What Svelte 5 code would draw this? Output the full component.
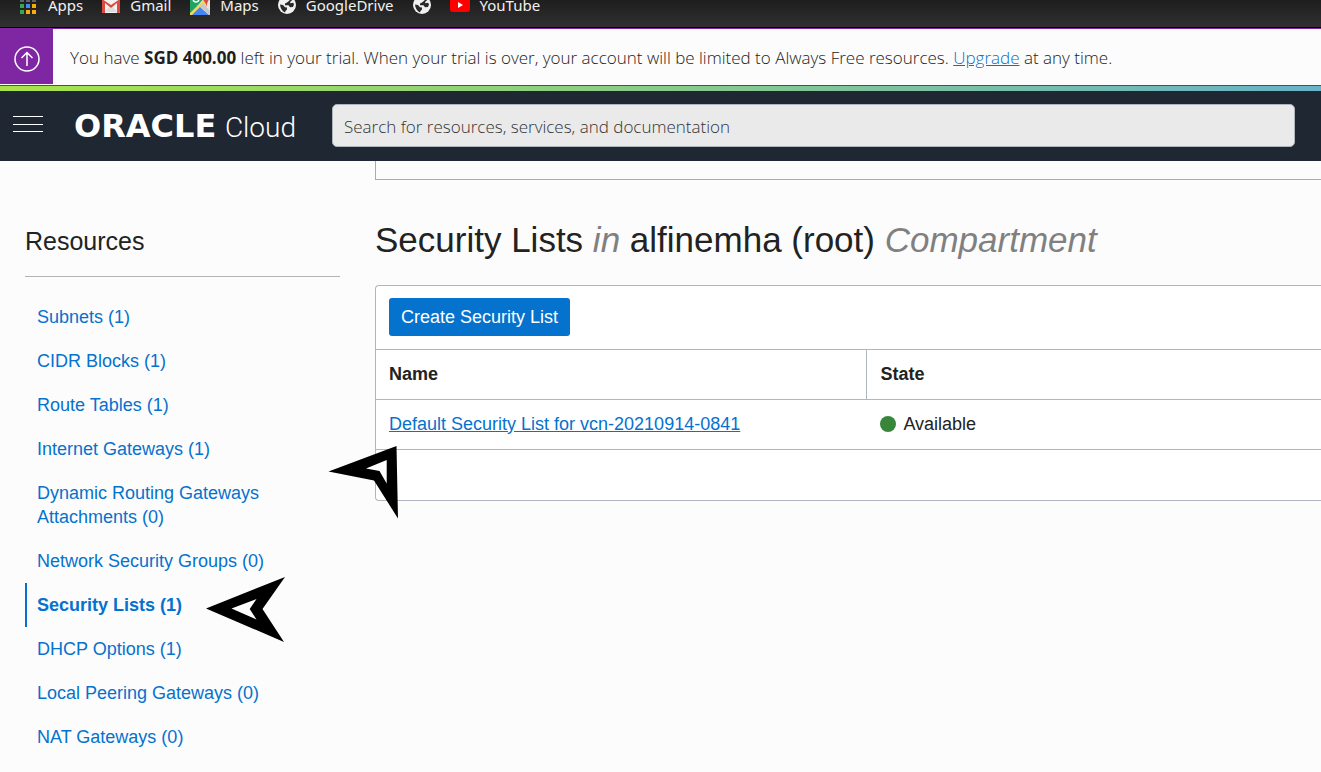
<script>
  const resources = [
    ['Subnets', 1],
    ['CIDR Blocks', 1],
    ['Route Tables', 1],
    ['Internet Gateways', 1],
    ['Dynamic Routing Gateways Attachments', 0],
    ['Network Security Groups', 0],
    ['Security Lists', 1],
    ['DHCP Options', 1],
    ['Local Peering Gateways', 0],
    ['NAT Gateways', 0]
  ];
  const active = 'Security Lists';
  const appColors = ['#5f6368', '#5f6368', '#5f6368', '#34a853', '#4285f4', '#f9ab00', '#34a853', '#fbab0c', '#fbab0c'];
</script>

{#snippet globe()}
  <svg width="18" height="18" viewBox="0 0 18 18" aria-hidden="true">
    <circle cx="9" cy="9" r="9" fill="#f1f1f1" />
    <path d="M2 8.5 5 9l2 2.2 2 .3v2L7.5 15 7 16.400Q2.500 14.500 2 8.500ZM7.500 2h4v2.500L9 6.500l-2 1v1.700h3.500l1.500 2 3-.2 1-2.500-.8-1.700-2.700.5L12 6l2-1.500-2.500-3Z" fill="#2a2a2a" />
  </svg>
{/snippet}

<nav class="bookmarks" aria-label="Bookmarks">
  <a href="#apps">
    <svg width="19" height="20" viewBox="0 0 19 20" aria-hidden="true">
      {#each appColors as color, i}
        <rect x={1 + (i % 3) * 6} y={3 + Math.floor(i / 3) * 6} width="4" height="4" fill={color} />
      {/each}
    </svg>
    Apps
  </a>
  <a href="#gmail">
    <svg width="18" height="20" viewBox="0 0 18 20" aria-hidden="true">
      <rect y="4" width="18" height="14" rx="1" fill="#f2f2f2" />
      <path d="M0 5v12q0 1 1 1h2V8l6 5 6-5v10h2q1 0 1-1V4L9 10 0 4Z" fill="#dd4b3e" />
      <path d="m3 17 4-5 2 1.500L11 12l4 5Z" fill="#ddd" />
    </svg>
    Gmail
  </a>
  <a href="#maps">
    <svg width="20" height="20" viewBox="0 0 20 20" aria-hidden="true">
      <path d="M0 0h20v20H0Z" fill="#e5e5e5" />
      <path d="M0 0h17L1 18H0Z" fill="#1fa463" />
      <path d="M15 4 0 18v2h3L17 7Z" fill="#ffd34d" />
      <path d="m10 12 9 8H2Z" fill="#4285f4" />
      <path d="m10 11 3-3 7 8v4h-1Z" fill="#c8c8c8" />
      <path d="M12 0h8q0 4-2 6l-2 6q0-4-2-6-2-2-2-6Z" fill="#dd4b3e" />
      <path d="M3 3q0 4 3 4t3-4H6" fill="none" stroke="#fff" stroke-width="1.500" />
    </svg>
    Maps
  </a>
  <a href="#drive">{@render globe()}GoogleDrive</a>
  <a href="#site" aria-label="Website">{@render globe()}</a>
  <a href="#youtube">
    <svg width="20" height="20" viewBox="0 0 20 20" aria-hidden="true">
      <rect y="3" width="20" height="14" rx="3" fill="#f00" />
      <path d="m8 7 5 3-5 3Z" fill="#fff" />
    </svg>
    YouTube
  </a>
</nav>

<section class="trial">
  <div class="trial-icon">
    <svg width="26" height="26" viewBox="0 0 26 26" fill="none" stroke="#fff" stroke-width="1.500" aria-hidden="true">
      <circle cx="13" cy="13" r="12" />
      <path d="M13 20V6.500M7.500 12 13 6.500l5.500 5.500" />
    </svg>
  </div>
  <p>You have <b>SGD 400.00</b> left in your trial. When your trial is over, your account will be limited to Always Free resources. <a href="#upgrade">Upgrade</a> at any time.</p>
</section>

<header>
  <button class="menu" aria-label="Menu">
    <svg width="30" height="18" viewBox="0 0 30 18" aria-hidden="true">
      <path d="M0 .500h30M0 8.500h30M0 15.500h30" stroke="#fff" />
    </svg>
  </button>
  <a class="brand" href="#home"><span class="oracle">ORACLE</span><span class="cloud">Cloud</span></a>
  <input type="search" aria-label="Search" placeholder="Search for resources, services, and documentation" />
</header>

<div class="page">
  <aside>
    <h2>Resources</h2>
    <ul>
      {#each resources as [name, count]}
        <li class:active={name === active}><a href="#resource">{name} ({count})</a></li>
      {/each}
    </ul>
  </aside>
  <main>
    <div class="details"></div>
    <h1>Security Lists <i>in</i> alfinemha (root) <i>Compartment</i></h1>
    <div class="panel">
      <div class="toolbar"><button class="create">Create Security List</button></div>
      <table>
        <thead>
          <tr><th class="name">Name</th><th>State</th></tr>
        </thead>
        <tbody>
          <tr>
            <td><a href="#list">Default Security List for vcn-20210914-0841</a></td>
            <td><span class="state"><span class="dot"></span>Available</span></td>
          </tr>
        </tbody>
      </table>
      <div class="footer"></div>
    </div>
  </main>
  <svg class="pointer upper" width="70" height="73" viewBox="328 446 70 73" aria-hidden="true">
    <path d="M328.500 471.500 396.500 446 398 518.500 374 480.500Z" />
    <path d="M366 468.500 386.700 460V483.500L379.500 471Z" fill="#fff" />
  </svg>
  <svg class="pointer lower" width="80" height="66" viewBox="206 577 80 66" aria-hidden="true">
    <path d="M206 608.500 285 577 262.500 609 284 642Z" />
    <path d="M231.500 608.500 256.500 599 249.700 609 256.500 619.500Z" fill="#fff" />
  </svg>
</div>

<style>
  :global(body) {
    margin: 0;
    background: #fcfcfc;
    overflow: hidden;
  }
  * {
    box-sizing: border-box;
  }
  a {
    color: #0572ce;
  }
  .bookmarks {
    display: flex;
    align-items: flex-start;
    gap: 20px;
    height: 28px;
    padding-left: 19px;
    overflow: hidden;
    background: linear-gradient(#1e1e1e, #303030);
    border-bottom: 1px solid #000;
    font: 15px "Noto Sans", sans-serif;
  }
  .bookmarks a {
    display: flex;
    align-items: center;
    gap: 10px;
    height: 20px;
    margin-top: -5px;
    color: #f1f1f1;
    text-decoration: none;
  }
  .bookmarks a + a {
    margin-left: -1px;
  }
  .trial {
    display: flex;
    height: 58px;
    border: solid #7f27a3;
    border-width: 1px 0;
    color: #222;
    font: 300 17px "Open Sans", sans-serif;
  }
  .trial-icon {
    display: grid;
    place-items: center;
    width: 53px;
    height: 55px;
    padding-top: 4px;
    background: #7f27a3;
  }
  .trial p {
    margin: 0 0 0 17px;
    line-height: 58px;
    white-space: nowrap;
  }
  .trial b {
    color: #1e1e1e;
    font-weight: 700;
  }
  header {
    display: flex;
    align-items: center;
    height: 75px;
    padding: 0 26px 2px 13px;
    background: #1e2732;
    border-top: 5px solid;
    border-image: linear-gradient(90deg, #a9e34b, #68b3c8) 1;
    border-width: 5px 0 0;
  }
  .menu {
    width: 30px;
    height: 24px;
    padding: 0;
    border: 0;
    background: none;
  }
  .menu svg {
    display: block;
  }
  .brand {
    display: flex;
    align-items: baseline;
    justify-content: space-between;
    width: 222px;
    margin: 2px 36px 0 31px;
    color: #fff;
    text-decoration: none;
  }
  .oracle {
    font: bold 32px "DejaVu Sans", sans-serif;
  }
  .cloud {
    font: 300 28px Roboto, sans-serif;
  }
  input {
    flex: 1;
    min-width: 0;
    height: 43px;
    padding: 2px 11px 0;
    border: 1px solid #aeb4bd;
    border-radius: 5px;
    background: #eaeaea;
    font: 300 17px "Open Sans", sans-serif;
  }
  input::placeholder {
    color: #333;
    opacity: 1;
  }
  .page {
    position: relative;
    display: flex;
    gap: 35px;
    padding-left: 25px;
    color: #222;
    font: 18px/24px "Liberation Sans", Arial, sans-serif;
  }
  aside {
    flex: 0 0 315px;
    padding-top: 64px;
  }
  h2 {
    margin: 0;
    padding-bottom: 19px;
    border-bottom: 1px solid #b3b3b3;
    font-size: 25px;
    font-weight: 400;
    line-height: 32px;
  }
  ul {
    margin: 18px 0 0;
    padding: 0;
    list-style: none;
  }
  li {
    padding: 10px 70px 10px 10px;
    border-left: 2px solid transparent;
  }
  li a {
    text-decoration: none;
  }
  .active {
    border-color: #0572ce;
    font-weight: 700;
  }
  main {
    flex: 1;
    min-width: 0;
  }
  .details {
    height: 19px;
    border: solid #aaa;
    border-width: 0 0 1px 1px;
  }
  h1 {
    margin: 39px 0 25px;
    font-size: 35px;
    font-weight: 400;
    line-height: 41px;
    white-space: nowrap;
  }
  h1 i {
    color: #808080;
  }
  .panel {
    border: 1px solid #b0b5c0;
    border-right: 0;
    border-radius: 4px 0 0 4px;
    background: #fff;
  }
  .toolbar {
    padding: 12px 13px 13px;
  }
  .create {
    display: block;
    height: 38px;
    padding: 0 12px;
    border: 0;
    border-radius: 3px;
    background: #0572ce;
    color: #fff;
    font: inherit;
  }
  table {
    width: 100%;
    border-collapse: separate;
    border-spacing: 0;
    table-layout: fixed;
  }
  th,
  td {
    height: 50px;
    padding: 0 13px 2px;
    border-top: 1px solid #b0b5c0;
    text-align: left;
  }
  .name {
    width: 52%;
    border-right: 1px solid #b0b5c0;
  }
  .state {
    display: flex;
    align-items: center;
    gap: 7px;
  }
  .dot {
    width: 16px;
    height: 16px;
    border-radius: 50%;
    background: #37863a;
  }
  .footer {
    height: 51px;
    border-top: 1px solid #b0b5c0;
  }
  .pointer {
    position: absolute;
  }
  .upper {
    left: 328px;
    top: 285px;
  }
  .lower {
    left: 206px;
    top: 416px;
  }
</style>
